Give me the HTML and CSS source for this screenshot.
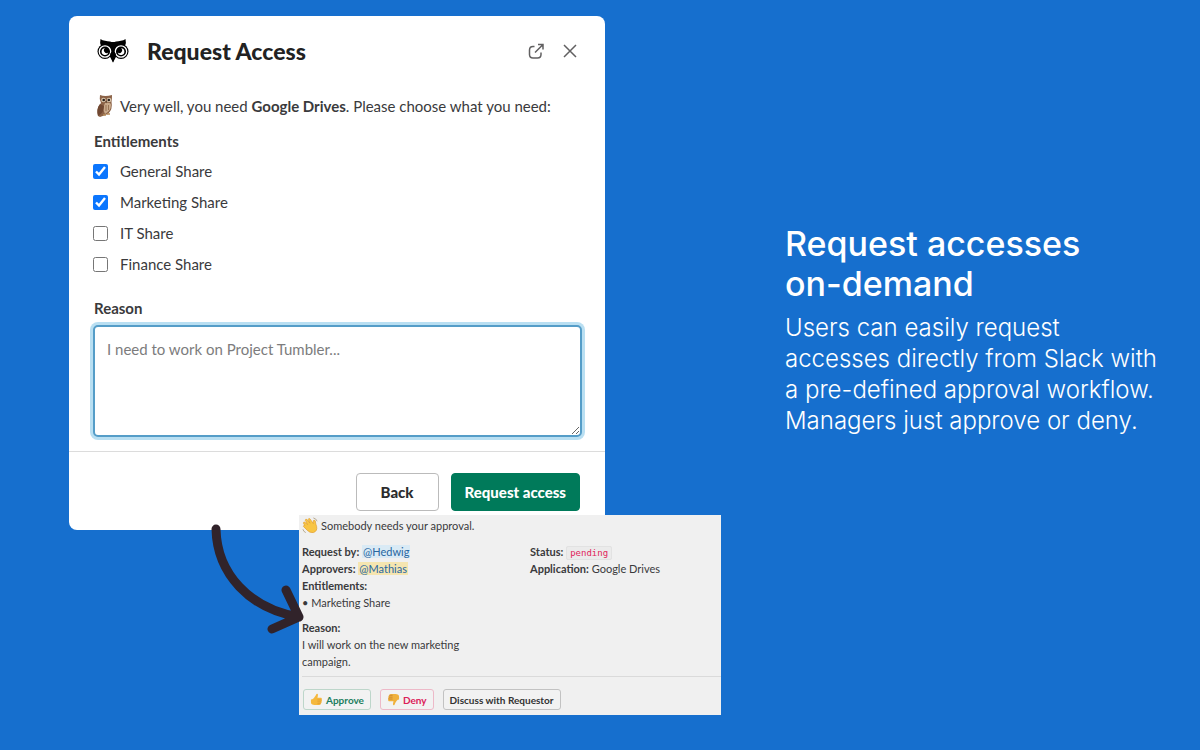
FILE: index.html
```html
<!DOCTYPE html>
<html lang="en">
<head>
  <meta charset="utf-8">
  <meta name="viewport" content="width=device-width, initial-scale=1">
  <title>Request accesses on-demand</title>
  <link rel="stylesheet" href="styles.css">
</head>
<body>
  <main class="slide">
    <div class="showcase">
      <form class="modal">
        <header class="modal-header">
          <svg class="logo" viewBox="0 0 32 24" aria-hidden="true">
            <path d="M3.500 0C6 2 10 2 13 2.500Q16 3.500 19 2.500C22 2 26 2 28.500 0Q29.500 4 28 7L20 16L16 23.500L12 16L4 7Q2.500 4 3.500 0z" fill="#000"/>
            <circle cx="8" cy="12.500" r="7.500" fill="#000"/>
            <circle cx="24" cy="12.500" r="7.500" fill="#000"/>
            <circle cx="8" cy="12.500" r="5.700" fill="#000" stroke="#fff" stroke-width="1.300"/>
            <circle cx="24" cy="12.500" r="5.700" fill="#000" stroke="#fff" stroke-width="1.300"/>
            <path d="M13 15L16 23.500L19 15L16 11z" fill="#000"/>
            <path d="M8 9.200a3.400 3.400 0 1 0 3.300 4.300a2.500 2.500 0 0 1-3.300-4.300z" fill="#fff"/>
            <path d="M24 9.200a3.400 3.400 0 1 1-3.300 4.300a2.500 2.500 0 0 0 3.300-4.300z" fill="#fff"/>
          </svg>
          <h1 class="modal-title">Request Access</h1>
          <button class="icon-button" type="button" aria-label="Open in new window">
            <svg viewBox="0 0 18 18" width="18" height="18">
              <path d="M7.500 4.500H6Q2.500 4.500 2.500 8V12.500Q2.500 16 6 16H10.500Q14 16 14 12.500V10.500M8 10.500L15.500 3M11 2.500H16V7.500"/>
            </svg>
          </button>
          <button class="icon-button" type="button" aria-label="Close">
            <svg viewBox="0 0 18 18" width="18" height="18">
              <path d="M3 3L15 15M15 3L3 15"/>
            </svg>
          </button>
        </header>

        <div class="modal-body">
          <p class="intro">
            <svg class="owl" viewBox="0 0 18 24" aria-hidden="true">
              <path d="M4 1Q9 3 16 1Q16 5 15.500 8Q17 15 12 20L4 23L2 22Q0 14 5 9Q3 5 4 1z" fill="#8b6247"/>
              <path d="M9 9Q15 8 15 11Q15 17 9 20Q6 15 9 9z" fill="#c9aa8b"/>
              <path d="M4 10Q0 15 2 22Q8 19 8 12z" fill="#704832"/>
              <path d="M10 11v6M12.500 11v5" stroke="#987354" stroke-width="1"/>
              <circle cx="7.500" cy="6" r="2.300" fill="#dbc8ae"/>
              <circle cx="13" cy="6" r="2.300" fill="#dbc8ae"/>
              <circle cx="7.700" cy="6" r="1.300" fill="#2a211d"/>
              <circle cx="12.800" cy="6" r="1.300" fill="#2a211d"/>
              <path d="M9.500 7h1.500l-.8 2.500z" fill="#5b4634"/>
              <path d="M7 21h3M11 20h3" stroke="#b78c58" stroke-width="1.500"/>
            </svg>
            <span>Very well, you need <b>Google Drives</b>. Please choose what you need:</span>
          </p>

          <fieldset class="entitlements">
            <legend class="field-label">Entitlements</legend>
            <label class="option"><input type="checkbox" checked>General Share</label>
            <label class="option"><input type="checkbox" checked>Marketing Share</label>
            <label class="option"><input type="checkbox">IT Share</label>
            <label class="option"><input type="checkbox">Finance Share</label>
          </fieldset>

          <label class="field-label" for="reason">Reason</label>
          <textarea class="reason" id="reason" placeholder="I need to work on Project Tumbler..."></textarea>
        </div>

        <footer class="modal-footer">
          <button class="button" type="button">Back</button>
          <button class="button button-primary" type="submit">Request access</button>
        </footer>
      </form>

      <section class="message">
        <p class="message-intro">
          <svg class="emoji" viewBox="0 0 18 18" aria-hidden="true">
            <path d="M3 9L1.500 6.500Q1.500 5 3 5.500L6 8L3.500 3.500Q3.500 2 5 2.500L8.500 6.500L6.500 2.500Q7 1 8.500 2L12 7L12 4Q12.500 2.500 14 4Q14.500 8 15.500 10Q16.500 15 12 16.500Q8 17 5.500 14L1.500 10Q1.500 8.500 3 9z" fill="#f8c544" stroke="#e09c2c" stroke-width=".7"/>
            <path d="M12 1Q15 1.500 16 4.500M1 13Q1.500 15.500 4 16.500" fill="none" stroke="#b5a78e" stroke-width="1"/>
          </svg>
          Somebody needs your approval.
        </p>
        <div class="message-fields">
          <div>
            <p><b>Request by:</b> <a class="mention" href="#hedwig">@Hedwig</a></p>
            <p><b>Approvers:</b> <a class="mention mention-me" href="#mathias">@Mathias</a></p>
            <p><b>Entitlements:</b></p>
            <p>• Marketing Share</p>
          </div>
          <div>
            <p><b>Status:</b> <code class="status">pending</code></p>
            <p><b>Application:</b> Google Drives</p>
          </div>
          <div>
            <p><b>Reason:</b></p>
            <p>I will work on the new marketing campaign.</p>
          </div>
        </div>
        <div class="message-actions">
          <button class="small-button approve" type="button">
            <svg class="thumb" viewBox="0 0 14 14" aria-hidden="true">
              <path d="M1 7Q4 7 7 1Q9 0 8.500 3L8 5H12Q13.500 6 12.500 7.500Q13.500 8.500 12.300 9.500Q13 10.700 11.500 11.500Q11.500 13 9.500 13H5Q1 13 1 10z" fill="#f5b83d"/>
              <path d="M8 7.500h4.500M8 9.500h4M8 11.500h3.500" stroke="#d98d27" stroke-width=".6"/>
            </svg>
            Approve
          </button>
          <button class="small-button deny" type="button">
            <svg class="thumb" viewBox="0 0 14 14" aria-hidden="true">
              <path d="M13 7Q10 7 8 13Q6 14 6.500 11L7 9H2Q.5 8 1.500 6.500Q.5 5.500 1.700 4.500Q1 3.300 2.500 2.500Q2.500 1 4.500 1H9Q13 1 13 4z" fill="#f0b13c"/>
              <path d="M6 6.500H1.500M6 4.500H2M6 2.500H2.500" stroke="#bd7829" stroke-width=".7"/>
            </svg>
            Deny
          </button>
          <button class="small-button" type="button">Discuss with Requestor</button>
        </div>
      </section>

      <svg class="arrow" viewBox="0 0 100 116" aria-hidden="true">
        <path d="M9 9C10 54 43 89 92 97M79 70L92 97L65 109"/>
      </svg>
    </div>

    <section class="pitch">
      <h2 class="pitch-title">Request accesses<br>on-demand</h2>
      <p class="pitch-text">Users can easily request<br>accesses directly from Slack with<br>a pre-defined approval workflow.<br>Managers just approve or deny.</p>
    </section>
  </main>
</body>
</html>
```
FILE: styles.css
```css
* {
  box-sizing: border-box;
}
body {
  margin: 0;
  background-color: #166fce;
  font-family: Lato, sans-serif;
  color: #3a3a3c;
}
h1, h2, p {
  margin: 0;
}
button {
  font-family: inherit;
  cursor: pointer;
}
.slide {
  display: flex;
  align-items: center;
  gap: 64px;
  min-height: 100vh;
  padding: 16px 16px 35px 69px;
}
.showcase {
  position: relative;
  flex: 0 1 652px;
}

/* request dialog */
.modal {
  max-width: 536px;
  background-color: #fff;
  border-radius: 8px;
}
.modal-header {
  display: flex;
  align-items: center;
  gap: 16px;
  padding: 21px 26px 0 28px;
}
.logo {
  width: 32px;
  height: 24px;
}
.modal-title {
  flex: 1;
  padding-left: 2px;
  font-size: 23px;
  font-weight: 900;
  line-height: 28px;
  color: #222;
}
.icon-button {
  display: flex;
  padding: 0;
  border: 0;
  background: none;
}
.icon-button svg {
  fill: none;
  stroke: #616061;
  stroke-width: 1.5;
}
.modal-body {
  padding: 29px 23px 14px 24px;
}
.intro {
  display: flex;
  align-items: center;
  gap: 6px;
  padding-left: 3px;
  font-size: 15px;
  line-height: 24px;
}
.owl {
  width: 18px;
  height: 24px;
}
.entitlements {
  margin: 13px 0 18px;
  padding: 0;
  border: 0;
}
.field-label {
  display: block;
  padding: 0 0 5px 1px;
  font-size: 15px;
  font-weight: 700;
  line-height: 20px;
}
.option {
  display: flex;
  align-items: center;
  gap: 12px;
  font-size: 15px;
  line-height: 31px;
}
.option input {
  width: 15px;
  height: 15px;
  margin: 0;
  accent-color: #0b76fe;
}
.reason {
  display: block;
  width: 100%;
  height: 112px;
  margin-top: 2px;
  padding: 12px;
  border: 2px solid #559dc8;
  border-radius: 5px;
  box-shadow: 0 0 0 3px #b9dff2;
  font-family: inherit;
  font-size: 15px;
  line-height: 20px;
  outline: none;
}
.reason::placeholder {
  color: #7c7c7d;
}
.modal-footer {
  display: flex;
  justify-content: flex-end;
  gap: 12px;
  padding: 21px 25px 19px;
  border-top: 1px solid #dcdcdc;
}
.button {
  height: 38px;
  padding: 0 24px;
  border: 1px solid #bbb;
  border-radius: 4px;
  background-color: #fff;
  font-size: 15px;
  font-weight: 900;
  color: #2c2c2d;
}
.button-primary {
  padding: 0 13px;
  border-color: #007a5a;
  background-color: #007a5a;
  color: #fff;
}

/* approval message */
.message {
  position: relative;
  margin: -15px 0 0 230px;
  padding: 2px 0 5px 3px;
  background-color: #f0f0f0;
  font-size: 11px;
  line-height: 17px;
}
.message-intro {
  display: flex;
  align-items: center;
  gap: 2px;
}
.emoji {
  width: 17px;
  height: 17px;
}
.message-fields {
  display: grid;
  grid-template-columns: 180px 1fr;
  gap: 8px 48px;
  padding: 9px 0 6px;
}
.mention {
  padding: 0 1px;
  background-color: #d9eaf5;
  color: #2866a0;
  text-decoration: none;
}
.mention-me {
  background-color: #f5e5b0;
}
.status {
  padding: 1px 3px;
  border: 1px solid #e2e2e2;
  border-radius: 2px;
  background-color: #ebebeb;
  font-family: "DejaVu Sans Mono", monospace;
  font-size: 9px;
  line-height: 1;
  color: #e01e5a;
}
.message-actions {
  display: flex;
  gap: 9px;
  padding: 12px 0 0 1px;
  border-top: 1px solid #dadada;
}
.small-button {
  display: flex;
  align-items: center;
  gap: 3px;
  height: 21px;
  padding: 0 6px;
  border: 1px solid #c2c2c2;
  border-radius: 3px;
  background-color: #f2f2f2;
  font-size: 10px;
  font-weight: 700;
  color: #333;
}
.thumb {
  width: 13px;
  height: 13px;
}
.approve {
  border-color: #bdd6ca;
  color: #1c7e5e;
}
.deny {
  border-color: #edb9c8;
  color: #dc2058;
}

.arrow {
  position: absolute;
  left: 138px;
  top: 504px;
  width: 100px;
  height: 116px;
  fill: none;
  stroke: #31232a;
  stroke-width: 9;
  stroke-linecap: round;
  stroke-linejoin: round;
}

/* slide copy */
.pitch {
  flex: 1;
  padding-bottom: 72px;
  font-family: Inter, sans-serif;
  color: #fff;
  white-space: nowrap;
}
.pitch-title {
  margin-bottom: 8px;
  font-size: 34px;
  font-weight: 500;
  line-height: 40px;
}
.pitch-text {
  font-size: 24px;
  font-weight: 300;
  line-height: 31px;
}
```
